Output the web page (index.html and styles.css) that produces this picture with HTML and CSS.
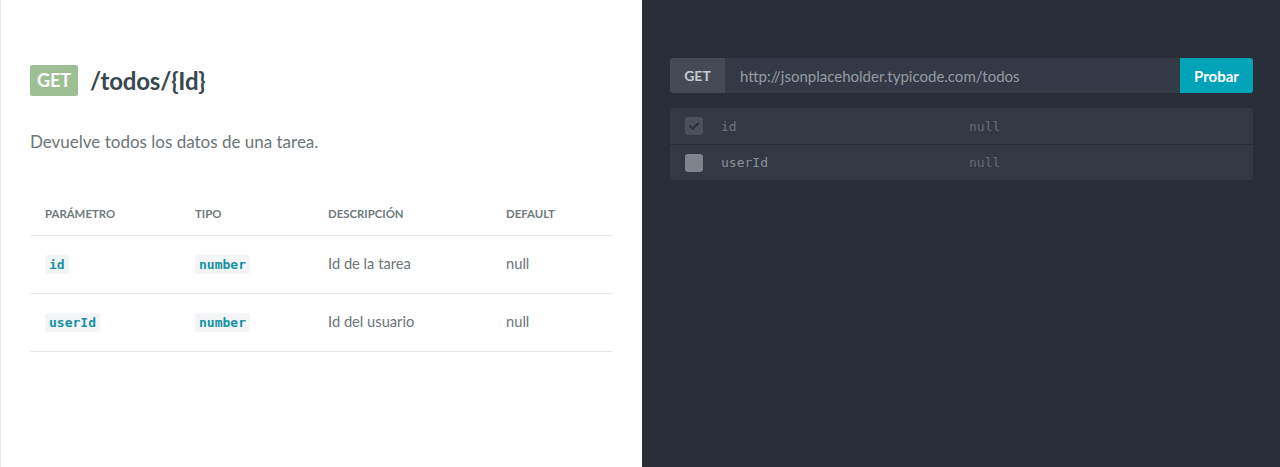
FILE: index.html
```html
<!DOCTYPE html>
<html lang="es">
<head>
<meta charset="utf-8">
<title>/todos/{Id}</title>
<link rel="stylesheet" href="styles.css">
</head>
<body>
<div class="page">
  <section class="doc">
    <h1 class="title"><span class="method">GET</span><span class="path">/todos/{Id}</span></h1>
    <p class="desc">Devuelve todos los datos de una tarea.</p>
    <table class="params">
      <thead>
        <tr><th class="c1">Parámetro</th><th class="c2">Tipo</th><th class="c3">Descripción</th><th class="c4">Default</th></tr>
      </thead>
      <tbody>
        <tr><td><code>id</code></td><td><code>number</code></td><td>Id de la tarea</td><td>null</td></tr>
        <tr><td><code>userId</code></td><td><code>number</code></td><td>Id del usuario</td><td>null</td></tr>
      </tbody>
    </table>
  </section>
  <section class="console">
    <div class="urlbar">
      <span class="verb">GET</span>
      <span class="url">http://jsonplaceholder.typicode.com/todos</span>
      <button class="try">Probar</button>
    </div>
    <div class="fields">
      <div class="field">
        <span class="box checked"><svg viewBox="0 0 18 18" width="18" height="18"><path d="M5 9.2l2.7 2.6L13 6.6" fill="none" stroke="#2d323c" stroke-width="2.2" stroke-linecap="round" stroke-linejoin="round"/></svg></span>
        <span class="fname">id</span>
        <span class="fval">null</span>
      </div>
      <div class="field">
        <span class="box"></span>
        <span class="fname">userId</span>
        <span class="fval">null</span>
      </div>
    </div>
  </section>
</div>
</body>
</html>
```
FILE: styles.css
```css
*, *::before, *::after {
  box-sizing: border-box;
}
html, body {
  margin: 0;
  padding: 0;
  height: 100%;
}
body {
  font-family: Lato, "Noto Sans", sans-serif;
  background: #fff;
}
.page {
  display: flex;
  height: 467px;
}
.doc {
  width: 642px;
  flex: none;
  padding: 0 30px 0 29px;
  border-left: 1px solid #e6e9ec;
  background: #fff;
}
.title {
  margin: 65px 0 0 0;
  display: flex;
  align-items: center;
  gap: 12px;
  height: 31px;
}
.method {
  display: inline-block;
  width: 48px;
  height: 31px;
  line-height: 31px;
  text-align: center;
  background: #9dbf94;
  color: #fff;
  font-size: 18px;
  font-weight: 700;
  border-radius: 2px;
}
.path {
  font-size: 24px;
  font-weight: 700;
  color: #38484e;
  letter-spacing: -0.2px;
}
.desc {
  margin: 34px 0 0 0;
  font-size: 17px;
  line-height: 24px;
  color: #6b7579;
}
.params {
  margin-top: 45px;
  width: 582px;
  border-collapse: collapse;
}
.params th {
  text-align: left;
  font-size: 11.4px;
  font-weight: 700;
  color: #707a7e;
  text-transform: uppercase;
  line-height: 15px;
  padding: 7px 0 14px 0;
  border-bottom: 1px solid #e6e9ec;
}
.params th.c1 { padding-left: 15px; width: 165px; }
.params th.c2 { width: 133px; }
.params th.c3 { width: 178px; }
.params td {
  height: 58px;
  border-bottom: 1px solid #e6e9ec;
  font-size: 14.7px;
  color: #6b7579;
  padding: 0 0 3px 0;
}
.params td:first-child { padding-left: 15px; }
code {
  font-family: "DejaVu Sans Mono", monospace;
  font-size: 13px;
  font-weight: 700;
  color: #1592a3;
  background: #f3f5f7;
  padding: 2px 4px;
  border-radius: 3px;
}
.console {
  flex: 1;
  background: #282d38;
  padding: 58px 27px 0 28px;
}
.urlbar {
  display: flex;
  height: 35px;
  border-radius: 3px;
  overflow: hidden;
  background: #343a45;
}
.verb {
  width: 55px;
  background: #454a54;
  color: #c8cbd0;
  font-size: 14px;
  font-weight: 700;
  display: flex;
  align-items: center;
  justify-content: center;
}
.url {
  flex: 1;
  color: #959ba3;
  font-size: 15px;
  display: flex;
  align-items: center;
  padding-left: 15px;
}
.try {
  width: 73px;
  border: 0;
  background: #00a3b8;
  color: #fff;
  font-family: inherit;
  font-size: 15px;
  font-weight: 700;
  padding: 0;
}
.fields {
  margin-top: 15px;
  background: #333943;
  border-radius: 3px;
}
.field {
  display: flex;
  align-items: center;
  height: 36px;
  padding-left: 15px;
}
.field + .field {
  border-top: 1px solid #282d38;
}
.box {
  width: 18px;
  height: 18px;
  border-radius: 3px;
  background: #7f838b;
  display: inline-flex;
}
.box.checked {
  background: #4b505b;
}
.fname, .fval {
  font-family: "DejaVu Sans Mono", monospace;
  font-size: 13px;
  color: #8a8f98;
}
.fname {
  margin-left: 18px;
  width: 248px;
}
.fval {
  color: #656a73;
}
.field:first-child .fname { color: #6f747d; }
```
